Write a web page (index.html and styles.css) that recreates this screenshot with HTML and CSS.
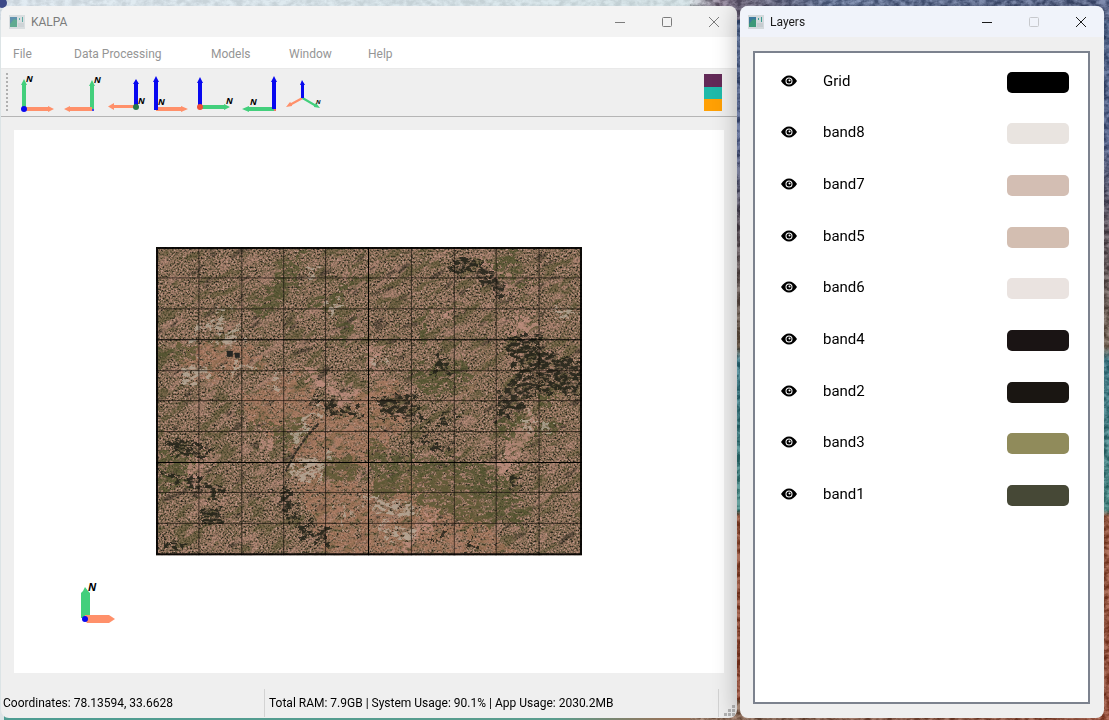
FILE: index.html
```html
<!DOCTYPE html>
<html lang="en">
<head>
  <meta charset="UTF-8" />
  <title>KALPA</title>
  <meta name="viewport" content="width=device-width, initial-scale=1.0" />
  <link rel="stylesheet" href="styles.css">
</head>
<body>
  <!-- desktop wallpaper -->
  <svg class="wallpaper" viewBox="0 0 1109 720" preserveAspectRatio="none" aria-hidden="true">
    <defs>
      <linearGradient id="sky" x1="0" x2="1" y1="0" y2="0">
        <stop offset="0" stop-color="#dfeaf2" /><stop offset=".62" stop-color="#d5e4e8" />
        <stop offset=".65" stop-color="#75647f" /><stop offset=".75" stop-color="#7189bd" />
        <stop offset="1" stop-color="#55679c" />
      </linearGradient>
      <linearGradient id="side" x1="0" x2="0" y1="0" y2="1">
        <stop offset="0" stop-color="#45659f" /><stop offset=".18" stop-color="#5a6fae" />
        <stop offset=".3" stop-color="#655665" /><stop offset=".48" stop-color="#8a7058" />
        <stop offset=".5" stop-color="#358fa4" /><stop offset=".72" stop-color="#41a59e" />
        <stop offset=".73" stop-color="#b5532f" /><stop offset="1" stop-color="#b54a2b" />
      </linearGradient>
      <linearGradient id="ground" x1="0" x2="1" y1="0" y2="0">
        <stop offset="0" stop-color="#4d9c92" /><stop offset=".5" stop-color="#5a9c8d" />
        <stop offset=".6" stop-color="#967359" /><stop offset="1" stop-color="#b54a2b" />
      </linearGradient>
      <filter id="grain" x="0" y="0" width="100%" height="100%" color-interpolation-filters="sRGB">
        <feTurbulence type="fractalNoise" baseFrequency=".14 .2" numOctaves="4" seed="4" />
        <feColorMatrix values="2.5 0 0 0 -.75  2.5 0 0 0 -.75  2.5 0 0 0 -.75  0 0 0 0 .3" />
      </filter>
    </defs>
    <rect width="1109" height="20" fill="url(#sky)" />
    <rect y="700" width="1109" height="20" fill="url(#ground)" />
    <rect x="725" y="20" width="384" height="680" fill="url(#side)" />
    <rect x="690" width="419" height="720" filter="url(#grain)" />
    <rect width="690" height="20" filter="url(#grain)" opacity=".3" />
    <rect y="20" width="4" height="700" fill="#dce4e6" />
    <circle cx="2" cy="3" r="5" fill="#3b4887" />
  </svg>

  <!-- shared icons -->
  <svg class="sprite" aria-hidden="true">
    <symbol id="app" viewBox="0 0 16 14">
      <rect width="16" height="14" fill="#d3d9dc" />
      <rect x="1" y="2" width="7" height="10" fill="#3b799c" />
      <path d="M1 12V9l4-5 3 1v7z" fill="#3c9878" />
      <path d="M10 3h1v2h-1zM13 2h1v5h-1z" fill="#3c9b91" />
      <path d="M9 9h6M9 11h6" stroke="#b8c0c5" />
    </symbol>
    <symbol id="min" viewBox="0 0 12 12"><path d="M1 6.5h10" /></symbol>
    <symbol id="max" viewBox="0 0 12 12"><rect x="1.5" y="1.5" width="9" height="9" rx="1" /></symbol>
    <symbol id="close" viewBox="0 0 12 12"><path d="M1 1l10 10M11 1L1 11" /></symbol>
    <symbol id="eye" viewBox="0 0 16 12">
      <path fill-rule="evenodd" d="M0 6C2 2.500 5 .5 8 .5S14 2.500 16 6c-2 3.500-5 5.500-8 5.500S2 9.500 0 6zM8 2.500a3.500 3.500 0 1 0 0 7 3.500 3.500 0 0 0 0-7z" />
      <path fill-rule="evenodd" d="M8 3.500a2.500 2.500 0 1 0 0 5 2.500 2.500 0 0 0 0-5zM8.500 4.500a1 1 0 1 1 0 2 1 1 0 0 1 0-2z" />
    </symbol>
  </svg>

  <main class="window main-window">
    <header class="title-bar">
      <svg class="app-icon"><use href="#app" /></svg>
      <h1>KALPA</h1>
      <div class="controls">
        <button aria-label="Minimize"><svg><use href="#min" /></svg></button>
        <button aria-label="Maximize"><svg><use href="#max" /></svg></button>
        <button aria-label="Close"><svg><use href="#close" /></svg></button>
      </div>
    </header>

    <nav class="menu-bar">
      <button>File</button>
      <button>Data Processing</button>
      <button>Models</button>
      <button>Window</button>
      <button>Help</button>
    </nav>

    <div class="toolbar">
      <span class="handle"></span>
      <button aria-label="View along +Z">
        <svg class="axes" viewBox="0 0 44 44">
          <path class="y" d="M8 38V14H7l3-6 3 6h-1v24z" /><path class="x" d="M10 36h24v-1l6 3-6 3v-1H10z" />
          <circle class="dot-z" cx="10" cy="38" r="3" /><text x="12" y="11">N</text>
        </svg>
      </button>
      <button aria-label="View along -Z">
        <svg class="axes" viewBox="0 0 44 44">
          <path class="y" d="M32 38V15h-1l3-6 3 6h-1v23z" /><path class="x" d="M34 36H12v-1l-6 3 6 3v-1h22z" />
          <circle class="dot-z" cx="35" cy="39" r="1" /><text x="36" y="12">N</text>
        </svg>
      </button>
      <button aria-label="View along +Y">
        <svg class="axes" viewBox="0 0 44 44">
          <path class="x" d="M34 34H12v-2l-6 3.500 6 3.500v-2h22z" /><path class="z" d="M32 36V13h-1l3-5 3 5h-1v23z" />
          <circle class="dot-y" cx="34" cy="36" r="3" /><text x="36" y="33">N</text>
        </svg>
      </button>
      <button aria-label="View along -Y">
        <svg class="axes" viewBox="0 0 44 44">
          <path class="x" d="M10 36h25v-1l7 3-7 3v-1H10z" /><path class="z" d="M8 39V11H7l3-6 3 6h-1v28z" />
          <text x="12" y="34">N</text>
        </svg>
      </button>
      <button aria-label="View along +X">
        <svg class="axes" viewBox="0 0 44 44">
          <path class="y" d="M10 34h24v-1l6 3-6 3v-1H10z" /><path class="z" d="M8 36V12H7l3-6 3 6h-1v24z" />
          <circle class="dot-x" cx="10" cy="36" r="3" /><text x="36" y="33">N</text>
        </svg>
      </button>
      <button aria-label="View along -X">
        <svg class="axes" viewBox="0 0 44 44">
          <path class="y" d="M40 36H15v-1l-7 3 7 3v-1h25z" /><path class="z" d="M38 38V11h-1l3-6 3 6h-1v27z" />
          <circle class="dot-x" cx="41" cy="39" r="1" /><text x="16" y="34">N</text>
        </svg>
      </button>
      <button aria-label="Isometric view">
        <svg class="axes" viewBox="0 0 44 44">
          <path class="x" d="M24 26l-11 6-1-1-4 5 6-1v-1l11-6z" /><path class="y" d="M24 28l12 7v1l6 1-4-5-1 1-12-7z" />
          <path class="z" d="M23 27V14h-1l2-5 3 5h-1v13z" /><text class="small" x="38" y="33">N</text>
        </svg>
      </button>
      <button class="palette" aria-label="Colour map">
        <svg viewBox="0 0 18 37">
          <rect width="18" height="13" fill="#632a58" /><rect y="13" width="18" height="12" fill="#1fbaaa" />
          <rect y="25" width="18" height="12" fill="#ffa004" />
        </svg>
      </button>
    </div>

    <section class="canvas">
      <svg class="terrain" viewBox="0 0 427 309" role="img" aria-label="Raster with grid">
        <defs>
          <filter id="soil" x="0" y="0" width="100%" height="100%" color-interpolation-filters="sRGB">
            <feTurbulence type="fractalNoise" baseFrequency=".55" numOctaves="2" seed="7" />
            <feColorMatrix values="1.900 0 0 0 -.47  1.900 0 0 0 -.47  1.900 0 0 0 -.47  0 0 0 0 1" />
            <feComponentTransfer>
              <feFuncR type="table" tableValues=".16 .32 .42 .53 .62 .69 .74" />
              <feFuncG type="table" tableValues=".14 .28 .36 .43 .48 .53 .62" />
              <feFuncB type="table" tableValues=".12 .2 .27 .34 .4 .46 .56" />
            </feComponentTransfer>
          </filter>
          <filter id="veins" x="0" y="0" width="100%" height="100%" color-interpolation-filters="sRGB">
            <feTurbulence type="fractalNoise" baseFrequency=".04 .11" numOctaves="5" seed="12" result="n" />
            <feColorMatrix values="0 0 0 0 .31  0 0 0 0 .31  0 0 0 0 .17  9 0 0 0 -5" result="green" />
            <feColorMatrix in="n" values="0 0 0 0 .72  0 0 0 0 .54  0 0 0 0 .48  0 9 0 0 -5.400" result="pink" />
            <feColorMatrix in="n" values="0 0 0 0 .17  0 0 0 0 .15  0 0 0 0 .12  0 0 12 0 -8.100" result="dark" />
            <feMerge><feMergeNode in="green" /><feMergeNode in="pink" /><feMergeNode in="dark" /></feMerge>
          </filter>
          <filter id="rough" x="-20%" y="-20%" width="140%" height="140%" color-interpolation-filters="sRGB">
            <feTurbulence type="fractalNoise" baseFrequency=".1" numOctaves="5" seed="3" result="n" />
            <feDisplacementMap in="SourceGraphic" in2="n" scale="30" xChannelSelector="R" yChannelSelector="G" result="d" />
            <feTurbulence type="fractalNoise" baseFrequency=".16 .3" numOctaves="4" seed="9" />
            <feColorMatrix values="0 0 0 0 0  0 0 0 0 0  0 0 0 0 0  6 0 0 0 -2.300" result="holes" />
            <feComposite in="d" in2="holes" operator="in" />
          </filter>
          <clipPath id="edge"><rect width="427" height="309" /></clipPath>
        </defs>
        <g clip-path="url(#edge)">
          <rect width="427" height="309" filter="url(#soil)" />
          <rect x="-120" y="-120" width="660" height="560" filter="url(#veins)" opacity=".5" transform="rotate(-32 213 154)" />

          <g filter="url(#rough)" fill="#b07b60" opacity=".6">
            <path d="M130 180L235 130 265 160 200 235 270 270 290 309H175L140 240z" />
            <path d="M205 235L300 225 360 309H215zM20 100l60-8 30 25-70 20zM80 150l60-25 25 40-50 30z" />
          </g>
          <g filter="url(#rough)" fill="#50532e" opacity=".75">
            <path d="M93 60L130 15l20-8-12 35-25 30zM150 55l55-28-15 20-40 22zM180 80l20-15-12 40zM0 100l45 0-5 12-40 0z" />
            <path d="M5 205l38-8-10 45-28 0zM105 180l35-10 20 22-30 10zM215 195l45 15 40 5-20 20-65 20z" />
            <path d="M285 210l60 10 30 55-55 5-60-25zM248 130l50-20 25 15-45 25zM375 135l30 10-15 20zM335 15l25-8 5 25-25 8z" />
            <path d="M355 40l25-5-15 10zM345 170l70 5-50 30-20-10zM270 60l-8 40 12 0zM165 210l35 0 10 20-45 5z" />
          </g>
          <g filter="url(#rough)" fill="#c08f80" opacity=".8">
            <path d="M128 106l60 38 15 0-5 18-30-20zM375 165l-35 60 12 5 30-50zM318 5l25 50 18-15zM320 50l-40 20 8 5z" />
            <path d="M340 155l40-28 6 12-40 24zM350 75l25-8 8 22-20 5zM395 120l32-8v14h-24z" />
            <path d="M100 170l8 40 8-4zM240 300l45-40 5 5-38 40zM30 200l20-10-5 70zM205 110l30-20-20 45z" />
          </g>
          <g filter="url(#rough)" fill="#25251b" opacity=".92">
            <path d="M315 7l20 17 20 20-10 7-12-14zM350 92l28-8 12 20 38 10v37l-45-8-14 20-30 10 10-28 12-20z" />
            <path d="M365 96l62 34v20l-45-8zM222 150l38-4 4 24-34 4zM156 150l50 12-5 10-30-7zM260 174l50-3-30 10z" />
            <path d="M45 265l25-5-10 22-15-3zM2 193l55 8-5 12-28-2zM0 217l70 25-5 10-60-25zM148 275l30 10-10 15-25-7z" />
            <path d="M130 238l16 38-7 3-20-35zM265 185l32 20-5 4-28-17zM240 190l18 18-4 5zM355 220l15 14-12 9z" />
            <path d="M278 277l12 5-4 14zM310 285l10 22-6 1zM2 290l28 8-20 8zM295 15l20-5 8 20-20-5zM282 105l20 20-25 4z" />
          </g>
          <g filter="url(#rough)" fill="#b5a897" opacity=".85">
            <path d="M37 82l30-12-5 13-25 8zM58 96l25-15 5 5-22 15zM22 130l24-15 5 14-15 10zM70 120l28-5-4 9-23 1z" />
            <path d="M110 140l18-18-5 18zM145 36l20-20 0 10zM165 67l24-18-8 18zM138 220l35-12-10 22-24 5z" />
            <path d="M130 195l25-30 10-5-20 35zM208 248l55 15-8 8-48-15zM228 278l35 10-10 8-24-6zM360 175l20-5-5 13z" />
            <path d="M398 60l24 5-14 8zM210 115l15-6 0 14zM385 182l10-10 0 14zM180 255l20 15-8 8zM60 55l20 8-20 4z" />
          </g>
          <path d="M163 177c-12 12-24 28-33 48" stroke="#302c24" stroke-width="2" stroke-dasharray="5 1 3 1" fill="none" />
          <path d="M336 100c-5 28-20 45-45 55M375 125l32 34M248 195c3 30 10 50-2 65l-35 34" stroke="#9a785b" stroke-width="3" stroke-opacity=".7" fill="none" filter="url(#rough)" />
          <path d="M71 104h6v6h-6zM79 106h5v5h-5z" fill="#252522" />
        </g>
        <path class="grid-minor" d="M43 0v309M86 0v309M128 0v309M170 0v309M256 0v309M299 0v309M341 0v309M384 0v309M0 31h427M0 62h427M0 124h427M0 154h427M0 185h427M0 246h427M0 277h427" />
        <path class="grid-major" d="M213 0v309M0 93h427M0 216h427" />
        <rect class="outline" x="1" y="1" width="425" height="307" />
      </svg>
      <svg class="gizmo" viewBox="0 0 40 44" aria-hidden="true">
        <path class="y" d="M2 39V14l2-2 2-4 3 4 2 2v25z" /><path class="x" d="M6 36h24l6 4-6 4H8l-3-4z" />
        <circle class="dot-z" cx="6" cy="40" r="3" /><text x="9" y="12">N</text>
      </svg>
    </section>

    <footer class="status-bar">
      <div class="coords">Coordinates: 78.13594, 33.6628</div>
      <div class="usage">Total RAM: 7.9GB | System Usage: 90.1% | App Usage: 2030.2MB</div>
      <svg class="grip" viewBox="0 0 11 11" aria-hidden="true">
        <path d="M8 0h3v3H8zM4 4h3v3H4zM8 4h3v3H8zM0 8h3v3H0zM4 8h3v3H4zM8 8h3v3H8z" />
      </svg>
    </footer>
  </main>

  <aside class="window layers-window">
    <header class="title-bar">
      <svg class="app-icon"><use href="#app" /></svg>
      <h2>Layers</h2>
      <div class="controls">
        <button aria-label="Minimize"><svg><use href="#min" /></svg></button>
        <button aria-label="Maximize" disabled><svg><use href="#max" /></svg></button>
        <button aria-label="Close"><svg><use href="#close" /></svg></button>
      </div>
    </header>
    <div class="layers-frame">
      <ul class="layers" id="layers"></ul>
    </div>
  </aside>

  <script>
    const layers = [
      ["Grid", "#000000"],
      ["band8", "#e9e4e0"],
      ["band7", "#d3beb3"],
      ["band5", "#d3beb1"],
      ["band6", "#eae3e0"],
      ["band4", "#1a1414"],
      ["band2", "#1a1612"],
      ["band3", "#908b5b"],
      ["band1", "#464836"]
    ];

    document.getElementById("layers").innerHTML = layers.map(([name, color]) => `
      <li>
        <button class="visibility" aria-label="Toggle ${name}"><svg><use href="#eye" /></svg></button>
        <span>${name}</span>
        <button class="swatch" aria-label="${name} colour" style="background: ${color}"></button>
      </li>`).join("");
  </script>
</body>
</html>
```
FILE: styles.css
```css
:root {
  --panel: #efefef;
  --muted: #959595;
  --x: #ff906a;
  --y: #43cf7c;
  --z: #0808f0;
}

* {
  box-sizing: border-box;
}

body {
  font-family: Roboto, "Noto Sans", sans-serif;
  font-size: 12px;
  line-height: 16px;
  margin: 0;
  padding: 6px 5px 2px 1px;
  height: 100vh;
  display: flex;
  gap: 3px;
  overflow: hidden;
}

button {
  font: inherit;
  color: inherit;
  background: none;
  border: none;
  padding: 0;
}

svg {
  display: block;
}

.wallpaper {
  position: fixed;
  inset: 0;
  width: 100%;
  height: 100%;
  z-index: -1;
}

.sprite {
  position: absolute;
  width: 0;
  height: 0;
}

.window {
  display: flex;
  flex-direction: column;
  background: var(--panel);
  border-radius: 8px;
}

.main-window {
  flex: 736;
  min-width: 0;
  overflow: hidden;
}

.layers-window {
  flex: 364;
  position: relative;
  box-shadow: 0 0 26px rgba(0, 0, 0, 0.35);
}

/* title bars */
.title-bar {
  display: flex;
  align-items: center;
  height: 31px;
  padding-left: 8px;
  background: #f3f3f3;
  color: #7c7c7c;
  border-radius: 8px 8px 0 0;
}

.layers-window .title-bar {
  background: #f0f3fa;
  color: #1a1a1a;
}

.title-bar h1, .title-bar h2 {
  font-size: 12px;
  font-weight: normal;
  margin: 0 0 0 6px;
}

.app-icon {
  width: 16px;
  height: 14px;
}

.main-window .app-icon {
  opacity: 0.8;
}

.controls {
  display: flex;
  margin-left: auto;
}

.controls button {
  display: grid;
  place-items: center;
  width: 47px;
  height: 30px;
}

.controls svg {
  width: 12px;
  height: 12px;
  fill: none;
  stroke: currentColor;
}

.controls button:disabled {
  color: #c7c9cd;
}

/* menu and toolbar */
.menu-bar {
  display: grid;
  grid-template-columns: 61px 137px 78px 79px auto;
  align-items: center;
  height: 32px;
  padding: 2px 0 0 12px;
  background: white;
  color: var(--muted);
  border-bottom: 1px solid #e9e9e9;
}

.menu-bar button {
  text-align: left;
}

.toolbar {
  display: flex;
  align-items: center;
  height: 48px;
  padding: 0 15px 0 5px;
  border-bottom: 1px solid #b5b5b5;
}

.handle {
  width: 2px;
  height: 40px;
  margin-right: 6px;
  background: repeating-linear-gradient(#b0b0b0 0 2px, transparent 2px 4px);
}

.axes {
  width: 44px;
  height: 44px;
  overflow: visible;
}

.axes text, .gizmo text {
  font: italic bold 9px "Open Sans", sans-serif;
}

.axes .small {
  font-size: 6px;
}

.gizmo text {
  font-size: 11px;
}

.x {
  fill: var(--x);
}

.y {
  fill: var(--y);
}

.z, .dot-z {
  fill: var(--z);
}

.dot-x {
  fill: #ef5037;
}

.dot-y {
  fill: #277849;
}

.palette {
  margin-left: auto;
}

.palette svg {
  width: 18px;
  height: 37px;
}

/* map canvas */
.canvas {
  flex: 1;
  min-height: 0;
  position: relative;
  display: grid;
  place-items: center;
  margin: 13px 13px 0;
  background: white;
}

.terrain {
  width: 60%;
}

.grid-minor, .grid-major, .outline {
  fill: none;
  stroke: #15110d;
  stroke-opacity: 0.7;
}

.grid-major {
  stroke: black;
  stroke-opacity: 1;
}

.outline {
  stroke: black;
  stroke-width: 2px;
  stroke-opacity: 0.9;
}

.gizmo {
  position: absolute;
  left: 65px;
  bottom: 50px;
  width: 40px;
  height: 44px;
}

/* status bar */
.status-bar {
  display: flex;
  align-items: center;
  height: 45px;
  padding: 15px 2px 0;
}

.coords {
  width: 261px;
}

.usage {
  flex: 1;
  padding-left: 4px;
  border: 1px solid #d3d3d3;
  border-width: 0 1px;
  line-height: 28px;
}

.grip {
  width: 11px;
  height: 11px;
  margin: 0 0 2px 5px;
  align-self: flex-end;
  fill: #b4b4b4;
}

/* layers list */
.layers-frame {
  flex: 1;
  margin: 14px 14px 14px 13px;
  padding: 2px 19px 0 26px;
  background: white;
  border: 2px solid #7c828e;
}

.layers {
  display: grid;
  grid-auto-rows: 1fr;
  height: 465px;
  margin: 0;
  padding: 0;
  list-style: none;
  font-size: 15px;
}

.layers li {
  display: flex;
  align-items: center;
}

.visibility svg {
  width: 16px;
  height: 12px;
}

.layers span {
  margin-left: 26px;
}

.swatch {
  width: 62px;
  height: 21px;
  margin: 3px 0 0 auto;
  border-radius: 5px;
}
```
